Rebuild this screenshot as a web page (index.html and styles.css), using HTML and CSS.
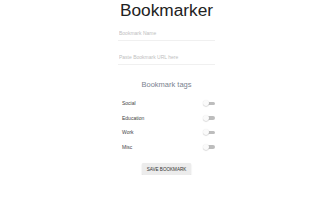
FILE: index.html
```html
<!DOCTYPE html>
<html>
<head>
<meta charset="utf-8">
<link rel="stylesheet" href="styles.css">
</head>
<body>
<div class="app">
  <h1 class="title">Bookmarker</h1>
  <div class="field"><input class="input" type="text" placeholder="Bookmark Name"></div>
  <div class="field"><input class="input" type="text" placeholder="Paste Bookmark URL here"></div>
  <h2 class="tags-title">Bookmark tags</h2>
  <ul class="tags">
    <li class="tag"><span class="tag-label">Social</span><span class="toggle"><span class="knob"></span></span></li>
    <li class="tag"><span class="tag-label">Education</span><span class="toggle"><span class="knob"></span></span></li>
    <li class="tag"><span class="tag-label">Work</span><span class="toggle"><span class="knob"></span></span></li>
    <li class="tag"><span class="tag-label">Misc</span><span class="toggle"><span class="knob"></span></span></li>
  </ul>
  <div class="actions"><button class="save">SAVE BOOKMARK</button></div>
</div>
</body>
</html>
```
FILE: styles.css
```css
html, body {
  margin: 0;
  padding: 0;
  background: #fff;
  font-family: "Liberation Sans", Arial, sans-serif;
}
.app {
  width: 97px;
  margin: 0 auto;
  display: flex;
  flex-direction: column;
}
.title {
  margin: 0;
  font-size: 17.3px;
  font-weight: normal;
  line-height: 20px;
  color: #222;
  text-align: center;
}
.field {
  margin-top: 6px;
}
.field + .field {
  margin-top: 9px;
}
.input {
  display: block;
  width: 100%;
  box-sizing: border-box;
  border: 0;
  border-bottom: 1px solid #f0f0f0;
  padding: 0 0 0 1px;
  height: 15px;
  font-family: inherit;
  font-size: 5px;
  color: #333;
  outline: none;
  background: transparent;
}
.input::placeholder {
  color: #c0c0c0;
}
.tags-title {
  margin: 15px 0 0;
  font-size: 7.5px;
  font-weight: normal;
  line-height: 10px;
  color: #7a838f;
  text-align: center;
}
.tags {
  list-style: none;
  margin: 9px 0 0;
  padding: 0 0 0 4px;
  display: flex;
  flex-direction: column;
  gap: 6px;
}
.tag {
  display: flex;
  align-items: center;
  justify-content: space-between;
  height: 8.5px;
  font-size: 5px;
  color: #444;
}
.toggle {
  position: relative;
  width: 11px;
  height: 3.5px;
  border-radius: 2px;
  background: #bdbdbd;
  margin-right: 0;
}
.knob {
  position: absolute;
  left: -1px;
  top: -1.25px;
  width: 6px;
  height: 6px;
  border-radius: 50%;
  background: #fafafa;
  box-shadow: 0 0.5px 1px rgba(0,0,0,0.25);
}
.actions {
  display: flex;
  justify-content: center;
  margin-top: 12px;
}
.save {
  border: 0;
  background: #ececec;
  color: #333;
  font-family: inherit;
  font-size: 4.6px;
  height: 12px;
  width: 49px;
  padding: 0;
  border-radius: 1px;
  box-shadow: 0 1px 1.5px rgba(0,0,0,0.2);
}
```
